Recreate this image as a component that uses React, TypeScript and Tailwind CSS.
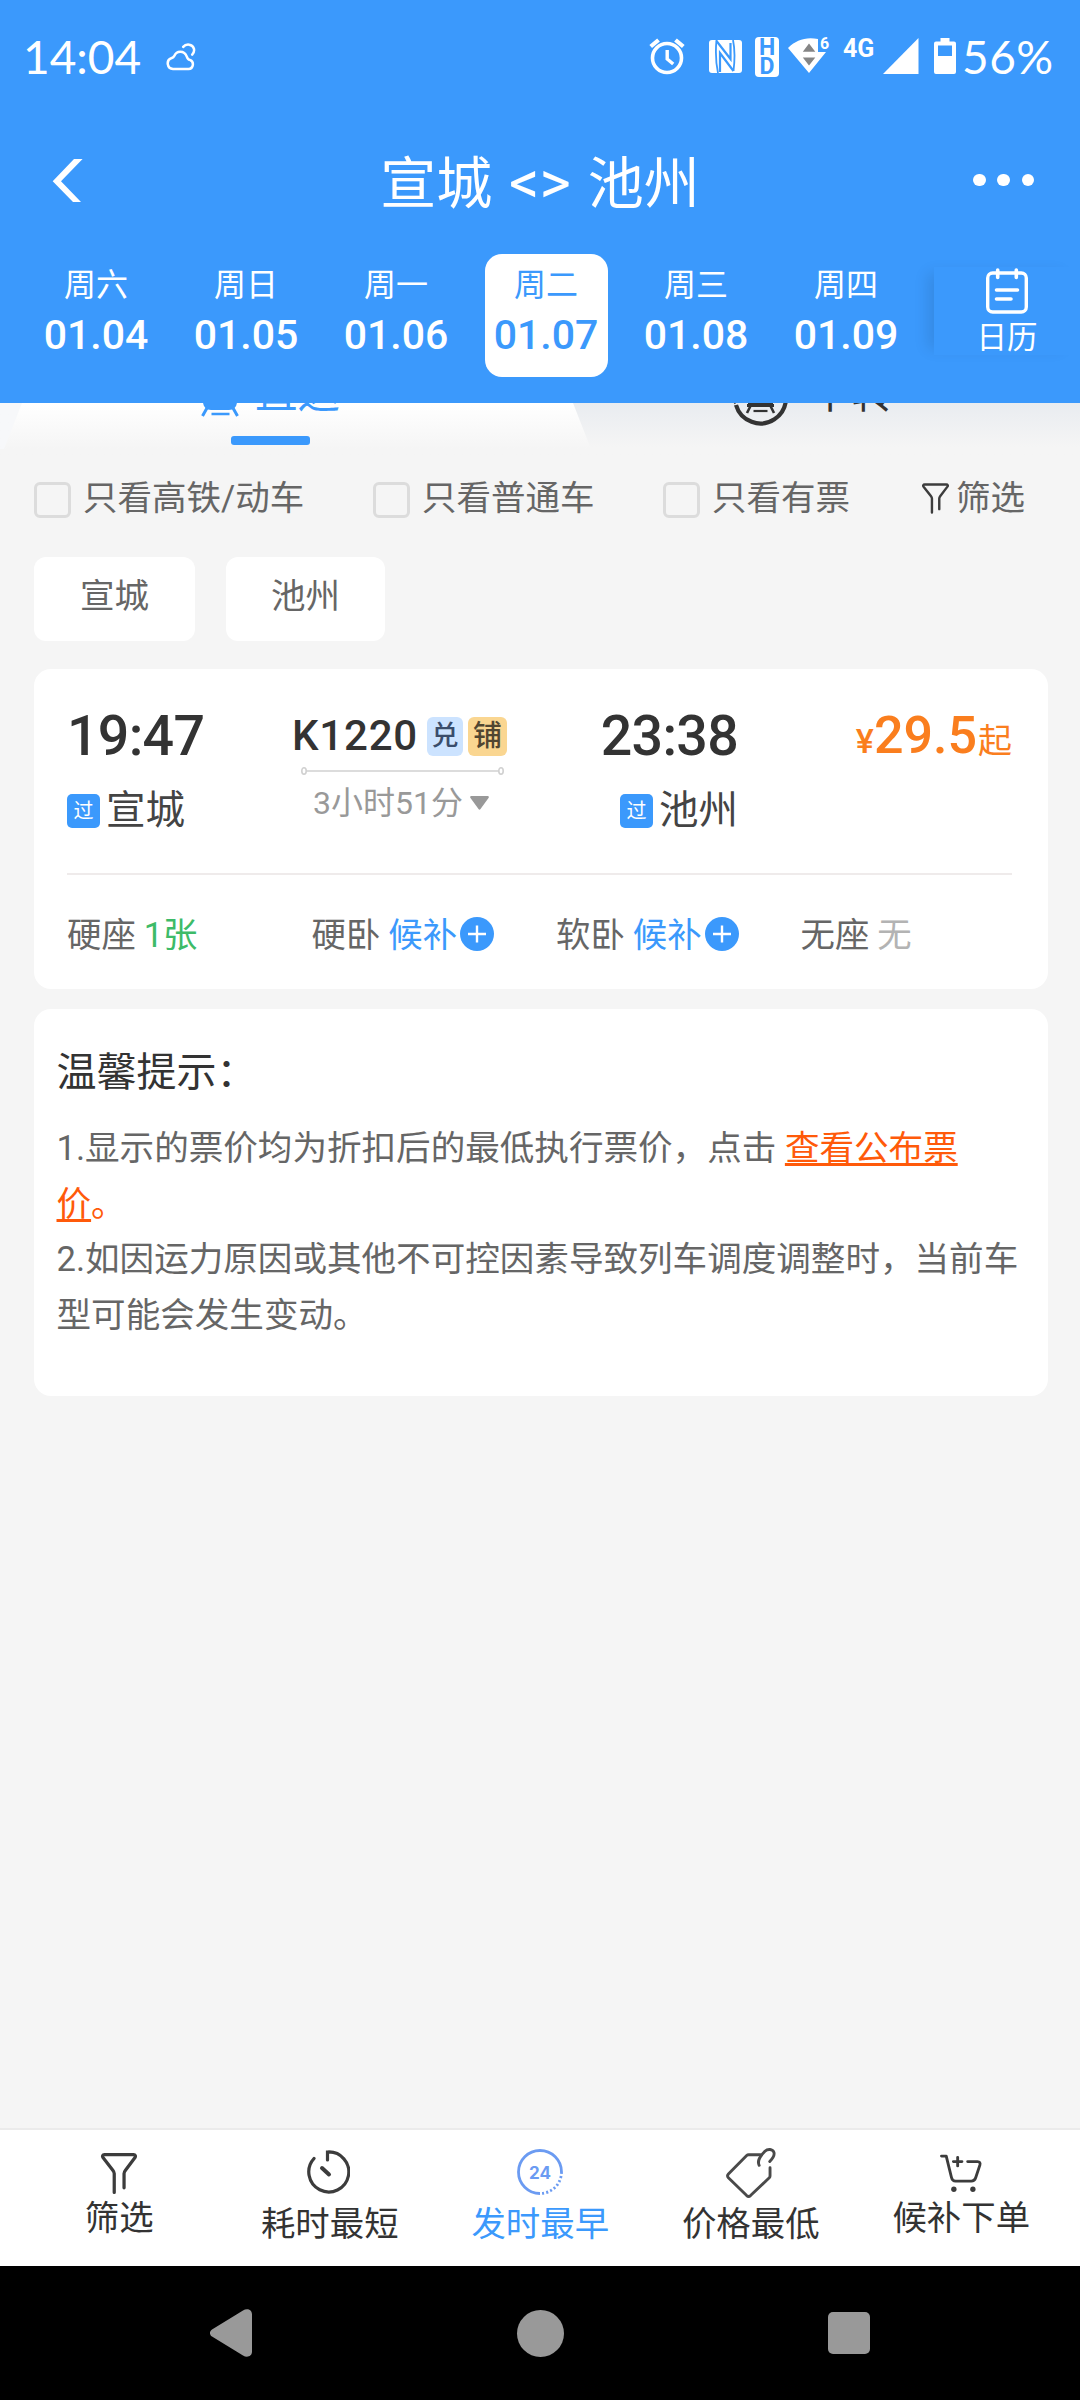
import type { ReactNode } from 'react';

interface DateItem {
  week: string;
  date: string;
}

interface Seat {
  name: string;
  status: string;
  kind: 'available' | 'waitlist' | 'none';
}

const dates: DateItem[] = [
  { week: '周六', date: '01.04' },
  { week: '周日', date: '01.05' },
  { week: '周一', date: '01.06' },
  { week: '周二', date: '01.07' },
  { week: '周三', date: '01.08' },
  { week: '周四', date: '01.09' },
];

const selectedDate = '01.07';

const seats: Seat[] = [
  { name: '硬座', status: '1张', kind: 'available' },
  { name: '硬卧', status: '候补', kind: 'waitlist' },
  { name: '软卧', status: '候补', kind: 'waitlist' },
  { name: '无座', status: '无', kind: 'none' },
];

const seatColors = {
  available: 'text-[#3dbb68]',
  waitlist: 'text-[#3b99fc]',
  none: 'text-[#b3b3b3]',
};

function StatusBar() {
  return (
    <div className="flex h-[108px] items-start font-['Lato',sans-serif] text-white">
      <div className="mt-[29px] ml-[23px] w-[143px] text-[46px] leading-[56px]">14:04</div>
      <svg className="mt-[43px] h-[28px] w-[30px]" viewBox="0 0 30 28" fill="none" stroke="#fff" strokeWidth="2.5" strokeLinecap="round" strokeLinejoin="round">
        <path d="M7 26h15.500a4.700 4.700 0 0 0 1.300-9.100c-1.800-.4-2.300-1-3-3.300C19.600 10.300 17 8.800 14.200 8.800c-2.900 0-4.700 1.500-5.800 4C7.700 14.400 7 14.700 5.300 15.200A5.600 5.600 0 0 0 7 26z" />
        <path d="M17.200 3.900c3-3.600 9.400-3 10.700 1.800.6 2.400 0 4.200-1.700 5.900" />
      </svg>

      <svg className="mt-[38px] ml-[453px] h-[38px] w-[36px]" viewBox="0 0 36 38" fill="none" stroke="#fff">
        <circle cx="18" cy="20" r="14.5" strokeWidth="3.6" />
        <path d="M1.700 8.500 9.500 2M34.300 8.500 26.500 2" strokeWidth="4.2" />
        <path d="M18.200 12v9l6 5" strokeWidth="3.4" />
      </svg>
      <svg className="mt-[40px] ml-[24px] h-[33px] w-[33px]" viewBox="0 0 33 33">
        <rect width="33" height="33" rx="3" fill="#fff" />
        <path d="M7.500 0c-.8 8-.8 22 1.500 33M24 0c2.200 10 1.600 22 .5 31" fill="none" stroke="#3b99fc" strokeWidth="1.8" />
        <path d="M7.500 1 21.500 19V3M11 32V13l13.500 18" fill="none" stroke="#3b99fc" strokeWidth="2.2" />
      </svg>
      <div className="mt-[37px] ml-[13px] flex h-[40px] w-[24px] flex-col items-center justify-center rounded-[4px] bg-white font-['Roboto',sans-serif] text-[23px] leading-[19px] font-bold text-[#3b99fc]">
        <span>H</span>
        <span>D</span>
      </div>
      <div className="relative mt-[38px] ml-[9px] h-[36px] w-[42px]">
        <svg className="h-[36px] w-[42px]" viewBox="0 0 42 36">
          <path d="M0 10C8 2 18-1.500 30 1v13h8L21 35z" fill="#fff" />
          <path d="M14.800 13.800h12.500L21 5.500zM14.800 19.500h12.500L21 27.500z" fill="#858585" />
        </svg>
        <span className="absolute -top-[2px] left-[32px] font-['Roboto',sans-serif] text-[16px] leading-[16px] font-bold">6</span>
      </div>
      <div className="mt-[36px] ml-[13px] w-[34px] font-['Roboto',sans-serif] text-[25px] leading-[26px] font-bold">4G</div>
      <svg className="mt-[38px] ml-[6px] h-[36px] w-[36px]" viewBox="0 0 36 36" fill="#fff">
        <path d="M35.500 0v36H0z" />
      </svg>
      <svg className="mt-[38px] ml-[15px] h-[36px] w-[22px]" viewBox="0 0 22 36">
        <path d="M6.500 0h9v3.500H20a2 2 0 0 1 2 2V34a2 2 0 0 1-2 2H2a2 2 0 0 1-2-2V5.500a2 2 0 0 1 2-2h4.500z" fill="#fff" />
        <rect x="4" y="7.5" width="14" height="10.5" fill="#3b99fc" />
      </svg>
      <div className="mt-[29px] ml-[6px] text-[46px] leading-[56px] tracking-[0.5px]">56%</div>
    </div>
  );
}

function TitleBar() {
  return (
    <div className="flex h-[144px] items-center justify-between pr-[46px] pl-[52px] text-white">
      <svg className="h-[43px] w-[55px]" viewBox="0 0 55 43" fill="#fff">
        <path d="M22 0h8.600L9 22.300 29 43h-8L.7 22.300z" />
      </svg>
      <h1 className="mt-[6px] text-[56px] leading-[66px]">
        宣城 <span className="mx-[3px] text-[60px]">&lt;&gt;</span> 池州
      </h1>
      <div className="flex w-[61px] justify-between">
        <i className="size-[12.5px] rounded-full bg-white" />
        <i className="size-[12.5px] rounded-full bg-white" />
        <i className="size-[12.5px] rounded-full bg-white" />
      </div>
    </div>
  );
}

function DateStrip() {
  return (
    <div className="flex h-[151px] items-start pt-[2px] pl-[21px] text-white">
      {dates.map((item) => (
        <div key={item.date} className="flex w-[150px] justify-center">
          <div
            className={
              item.date === selectedDate
                ? 'flex h-[123px] w-[123px] flex-col items-center rounded-[17px] bg-white pt-[11px] text-[#3b99fc]'
                : 'flex h-[123px] w-[123px] flex-col items-center pt-[11px]'
            }
          >
            <div className="text-[32px] leading-[40px]">{item.week}</div>
            <div className="mt-[6px] text-[41px] leading-[48px] font-medium">{item.date}</div>
          </div>
        </div>
      ))}
      <div className="mt-[13px] ml-[13px] flex h-[88px] w-[146px] flex-col items-center bg-[#3b99fc] shadow-[-12px_0_14px_-6px_rgba(0,0,0,0.1)]">
        <svg className="mt-[1px] h-[46px] w-[42px] shrink-0" viewBox="0 0 42 46" fill="none" stroke="#fff" strokeLinecap="round">
          <path d="M11.700 2v7.500M30.300 2v7.500" strokeWidth="3.6" />
          <rect x="1.7" y="5" width="38.6" height="39" rx="5" strokeWidth="3.4" />
          <path d="M10.500 22h21M10.500 31h14.500" strokeWidth="3.6" />
        </svg>
        <div className="mt-[4px] text-[30.5px] leading-[40px]">日历</div>
      </div>
    </div>
  );
}

function TrainIcon() {
  return (
    <svg className="h-[44px] w-[38px]" viewBox="0 0 38 44">
      <rect x="2" y="0" width="34" height="36" rx="8" fill="#3b99fc" />
      <path d="M6 34 1.500 42M32 34l4.500 8" stroke="#3b99fc" strokeWidth="3" />
      <path d="M10.500 40h18" stroke="#3b99fc" strokeWidth="2.6" />
    </svg>
  );
}

function TransferIcon() {
  return (
    <svg className="h-[56px] w-[58px]" viewBox="0 0 58 56" fill="none" stroke="#333">
      <path d="M5 35A25.500 25.500 0 1 0 6 18" strokeWidth="4.2" />
      <path d="M1 29.500l3.500 4" strokeWidth="2" />
      <path d="M17 14h25v22H17z" fill="#333" stroke="none" />
      <path d="M16 35.500h27" strokeWidth="3" />
      <path d="M19.500 36 16 43M39.500 36l3.500 7" strokeWidth="2.6" />
      <path d="M22.500 41h14" strokeWidth="2.2" />
    </svg>
  );
}

function TripTabs() {
  return (
    <div className="flex h-[52px] items-start overflow-hidden bg-linear-to-b from-[#e9ecf0] to-[#f5f5f5] to-85%">
      <div className="w-[591px] bg-linear-to-r from-[#f7f8fa] from-5% to-transparent to-5%">
        <div className="flex h-[46px] flex-col items-center bg-linear-to-b from-white to-[#f5f5f5] pr-[50px] [clip-path:polygon(22px_0,573px_0,100%_100%,4px_100%)]">
          <div className="-mt-[29px] flex h-[62px] shrink-0 items-start text-[#3b99fc]">
            <TrainIcon />
            <span className="-mt-[1px] ml-[16px] text-[42.5px] leading-[42px]">直达</span>
          </div>
          <div className="h-[9px] w-[79px] shrink-0 rounded-[3px] bg-[#3b99fc]" />
        </div>
      </div>
      <div className="-mt-[33px] ml-[140px] flex h-[62px] items-start text-[#333]">
        <TransferIcon />
        <span className="mt-[3px] ml-[20px] text-[42.5px] leading-[42px]">中转</span>
      </div>
    </div>
  );
}

function FunnelIcon({ className }: { className: string }) {
  return (
    <svg className={className} viewBox="0 0 38 43" fill="none" stroke="#3c3c3c" strokeWidth="3.4" strokeLinecap="round" strokeLinejoin="round">
      <path d="M14 41.300V21.500c0-1.500-.6-2.300-1.500-3.500L2.200 4.800C1.200 3.300 1.700 1.700 3.800 1.700h30.400c2.100 0 2.600 1.600 1.600 3.100L25.800 18c-.9 1.200-1.500 2-1.500 3.500V36.500" />
    </svg>
  );
}

function Checkbox({ label, className }: { label: string; className: string }) {
  return (
    <label className={`flex items-center ${className}`}>
      <span className="mt-[4px] mr-[12px] h-[36px] w-[37px] rounded-[6px] border-3 border-[#dcdcdc]" />
      <span className="leading-[48px]">{label}</span>
    </label>
  );
}

function Filters() {
  return (
    <div>
      <div className="flex h-[86px] items-center pl-[34px] text-[34.5px] text-[#666]">
        <Checkbox label="只看高铁/动车" className="w-[339px]" />
        <Checkbox label="只看普通车" className="w-[290px]" />
        <Checkbox label="只看有票" className="w-[259px]" />
        <FunnelIcon className="mr-[7px] h-[31px] w-[27px]" />
        <span className="leading-[48px]">筛选</span>
      </div>
      <div className="mt-[16px] ml-[34px] flex gap-[31px] text-[34.5px] leading-[79px] text-[#666]">
        <div className="h-[84px] w-[161px] rounded-[12px] bg-white text-center">宣城</div>
        <div className="h-[84px] w-[159px] rounded-[12px] bg-white text-center">池州</div>
      </div>
    </div>
  );
}

function PassStation({ name }: { name: string }) {
  return (
    <div className="mt-[20px] flex h-[52px] items-center">
      <span className="mr-[6px] h-[34px] w-[33px] rounded-[5px] bg-[#3b99fc] text-center text-[20px] leading-[35px] text-white">过</span>
      <span className="text-[39.5px] leading-[52px] text-[#444]">{name}</span>
    </div>
  );
}

function TrainCard() {
  return (
    <div className="mt-[28px] mr-8 ml-[34px] h-[320px] rounded-[17px] bg-white pt-[40px] pr-[36px] pl-[33px]">
      <div className="flex">
        <div className="w-[226px]">
          <div className="text-[55.5px] leading-[56px] font-medium tracking-[-0.7px] text-[#333]">19:47</div>
          <PassStation name="宣城" />
        </div>
        <div className="flex w-[215px] flex-col pt-[7px]">
          <div className="flex h-[40px] items-center">
            <span className="w-[134px] indent-[-1px] text-[42px] leading-[40px] font-medium tracking-[0.8px] text-[#333]">K1220</span>
            <span className="mr-[5px] h-[39px] w-[36px] rounded-[6px] bg-[#cce3ff] text-center text-[27px] leading-[39px] font-medium text-[#3a4d6b]">兑</span>
            <span className="h-[39px] w-[39px] rounded-[6px] bg-[#fad691] text-center text-[29px] leading-[39px] font-medium text-[#514631]">铺</span>
          </div>
          <svg className="mt-[10px] ml-[8px] h-[10px] w-[203px]" viewBox="0 0 203 10" fill="none" stroke="#d0d0d0" strokeWidth="1.6">
            <path d="M5.500 5h192" />
            <ellipse cx="3" cy="5" rx="2.2" ry="3.2" />
            <ellipse cx="200" cy="5" rx="2.2" ry="3.2" />
          </svg>
          <div className="mt-[7px] ml-[20px] flex items-center text-[32px] leading-[40px] text-[#999]">
            3小时51分
            <svg className="ml-[7px] h-[14px] w-[19px]" viewBox="0 0 19 14" fill="#999">
              <path d="M1 0h17q1.500.5.500 2L10.500 13q-1 1.500-2 0L.5 2Q-.5.500 1 0z" />
            </svg>
          </div>
        </div>
        <div className="flex w-[230px] flex-col items-end">
          <div className="text-[55.5px] leading-[56px] font-medium tracking-[-0.7px] text-[#333]">23:38</div>
          <PassStation name="池州" />
        </div>
        <div className="-mt-[1px] flex flex-1 items-baseline justify-end leading-[56px] text-[#fa7e1e]">
          <span className="text-[34px] font-medium">¥</span>
          <span className="mr-[1px] text-[52px] font-medium">29.5</span>
          <span className="text-[34px]">起</span>
        </div>
      </div>
      <div className="mt-[36px] h-[2px] bg-[#efebeb]" />
      <div className="mt-[36px] flex text-[34.4px] leading-[48px] text-[#666]">
        {seats.map((seat) => (
          <div key={seat.name} className="flex w-[244.5px] shrink-0 items-center">
            <span>{seat.name}</span>
            <span className={`ml-[8px] ${seatColors[seat.kind]}`}>{seat.status}</span>
            {seat.kind === 'waitlist' && (
              <svg className="mb-[3px] ml-[3px] size-[34px]" viewBox="0 0 34 34">
                <circle cx="17" cy="17" r="17" fill="#3b99fc" />
                <path d="M17 8.500v17M8 17h18" stroke="#fff" strokeWidth="2.4" />
              </svg>
            )}
          </div>
        ))}
      </div>
    </div>
  );
}

function Tips() {
  return (
    <div className="mt-[20px] mr-8 ml-[34px] h-[387px] rounded-[17px] bg-white pt-[36px] pr-[22px] pl-[22.5px]">
      <h2 className="text-[40px] leading-[56px] text-[#333]">温馨提示：</h2>
      <div className="mt-[20px] text-[34.57px] leading-[55.6px] text-[#666]">
        <p>
          1.显示的票价均为折扣后的最低执行票价，点击{' '}
          <span className="text-[#ff5a0a]">
            <a className="underline decoration-[3px] underline-offset-[3px] [text-decoration-skip-ink:none]">查看公布票价</a>。
          </span>
        </p>
        <p>2.如因运力原因或其他不可控因素导致列车调度调整时，当前车型可能会发生变动。</p>
      </div>
    </div>
  );
}

function TabItem({ label, active, low, children }: { label: string; active?: boolean; low?: boolean; children: ReactNode }) {
  return (
    <div className={`flex w-[210.5px] flex-col items-center ${active ? 'text-[#3b99fc]' : 'text-[#333]'}`}>
      <div className={`flex w-full flex-col items-center ${low ? 'h-[70px]' : 'h-[64px]'}`}>{children}</div>
      <span className="text-[34.4px] leading-[48px]">{label}</span>
    </div>
  );
}

function BottomTabs() {
  return (
    <div className="flex h-[138px] border-t-2 border-[#ebebeb] bg-white pl-[14px]">
      <TabItem label="筛选">
        <FunnelIcon className="mt-[23px] h-[43px] w-[38px]" />
      </TabItem>
      <TabItem label="耗时最短" low>
        <svg className="mt-[20px] mr-[4px] h-[44px] w-[44px]" viewBox="0 0 44 44" fill="none" stroke="#3c3c3c" strokeWidth="3.2" strokeLinecap="round">
          <path d="M8 8.500A20 20 0 1 0 21.500 2V10" />
          <path d="M16 18l7 6.500" strokeWidth="4" />
        </svg>
      </TabItem>
      <TabItem label="发时最早" active low>
        <svg className="mt-[19px] h-[46px] w-[46px]" viewBox="0 0 46 46" fill="none" stroke="#6b9bf2" strokeWidth="2.8">
          <path d="M23 44.500A21.500 21.500 0 1 1 44.500 23" />
          <path d="M44.500 23A21.500 21.500 0 0 1 23 44.500" strokeDasharray="2 2.2" />
          <text x="23" y="29.5" textAnchor="middle" fontFamily="Inter, sans-serif" fontSize="17" fontWeight="700" fill="#6b9bf2" stroke="none">24</text>
        </svg>
      </TabItem>
      <TabItem label="价格最低" low>
        <svg className="mt-[17px] h-[51px] w-[50px]" viewBox="0 0 52 52" fill="none" stroke="#4a4a4a" strokeWidth="3" strokeLinecap="round" strokeLinejoin="round">
          <path d="M35.500 7.500H23.500a3 3 0 0 0-2 .8L2.500 27.500a3 3 0 0 0 0 4L21.500 50a3 3 0 0 0 4 0L45 31.500a3 3 0 0 0 .8-2V21" />
          <path d="M34.500 18.500c-2.500-5 1-9.500 6-14.500 3-3 8-2.500 9.300 1 1 3-.8 6-4.300 9.500" />
        </svg>
      </TabItem>
      <TabItem label="候补下单">
        <svg className="mt-[24px] h-[42px] w-[44px]" viewBox="0 0 44 42" fill="none" stroke="#3c3c3c" strokeWidth="3" strokeLinecap="round" strokeLinejoin="round">
          <path d="M1.500 2.200H6.500l5.500 22.500c.6 2.600 1.800 3.800 4.300 3.800h16.500c2.500 0 3.800-1.200 4.600-3.500l4.400-13.300c.7-2.300-.2-3.700-2.500-3.700H29" />
          <path d="M18.500 3.500v9M14 8h9" />
          <circle cx="14.5" cy="37" r="2.8" fill="#3c3c3c" stroke="none" />
          <circle cx="34.5" cy="37" r="2.8" fill="#3c3c3c" stroke="none" />
        </svg>
      </TabItem>
    </div>
  );
}

function SystemNav() {
  return (
    <div className="flex h-[134px] items-center justify-between bg-black px-[210px]">
      <svg className="h-[48px] w-[42px]" viewBox="0 0 42 48" fill="#999">
        <path d="M2 20.500 33 1.500C37-1 42 .5 42 5.500v37c0 5-5 6.500-9 4L2 27.500C-.7 25.500-.7 22.500 2 20.500z" />
      </svg>
      <i className="size-[47px] rounded-full bg-[#999]" />
      <i className="size-[42px] rounded-[5px] bg-[#999]" />
    </div>
  );
}

export default function App() {
  return (
    <div lang="zh-CN" className="flex h-[2400px] w-[1080px] flex-col bg-[#f5f5f5] font-['Roboto','Noto_Sans_CJK_SC',sans-serif]">
      <header className="bg-[#3b99fc]">
        <StatusBar />
        <TitleBar />
        <DateStrip />
      </header>
      <main className="flex-1">
        <TripTabs />
        <Filters />
        <TrainCard />
        <Tips />
      </main>
      <BottomTabs />
      <SystemNav />
    </div>
  );
}
